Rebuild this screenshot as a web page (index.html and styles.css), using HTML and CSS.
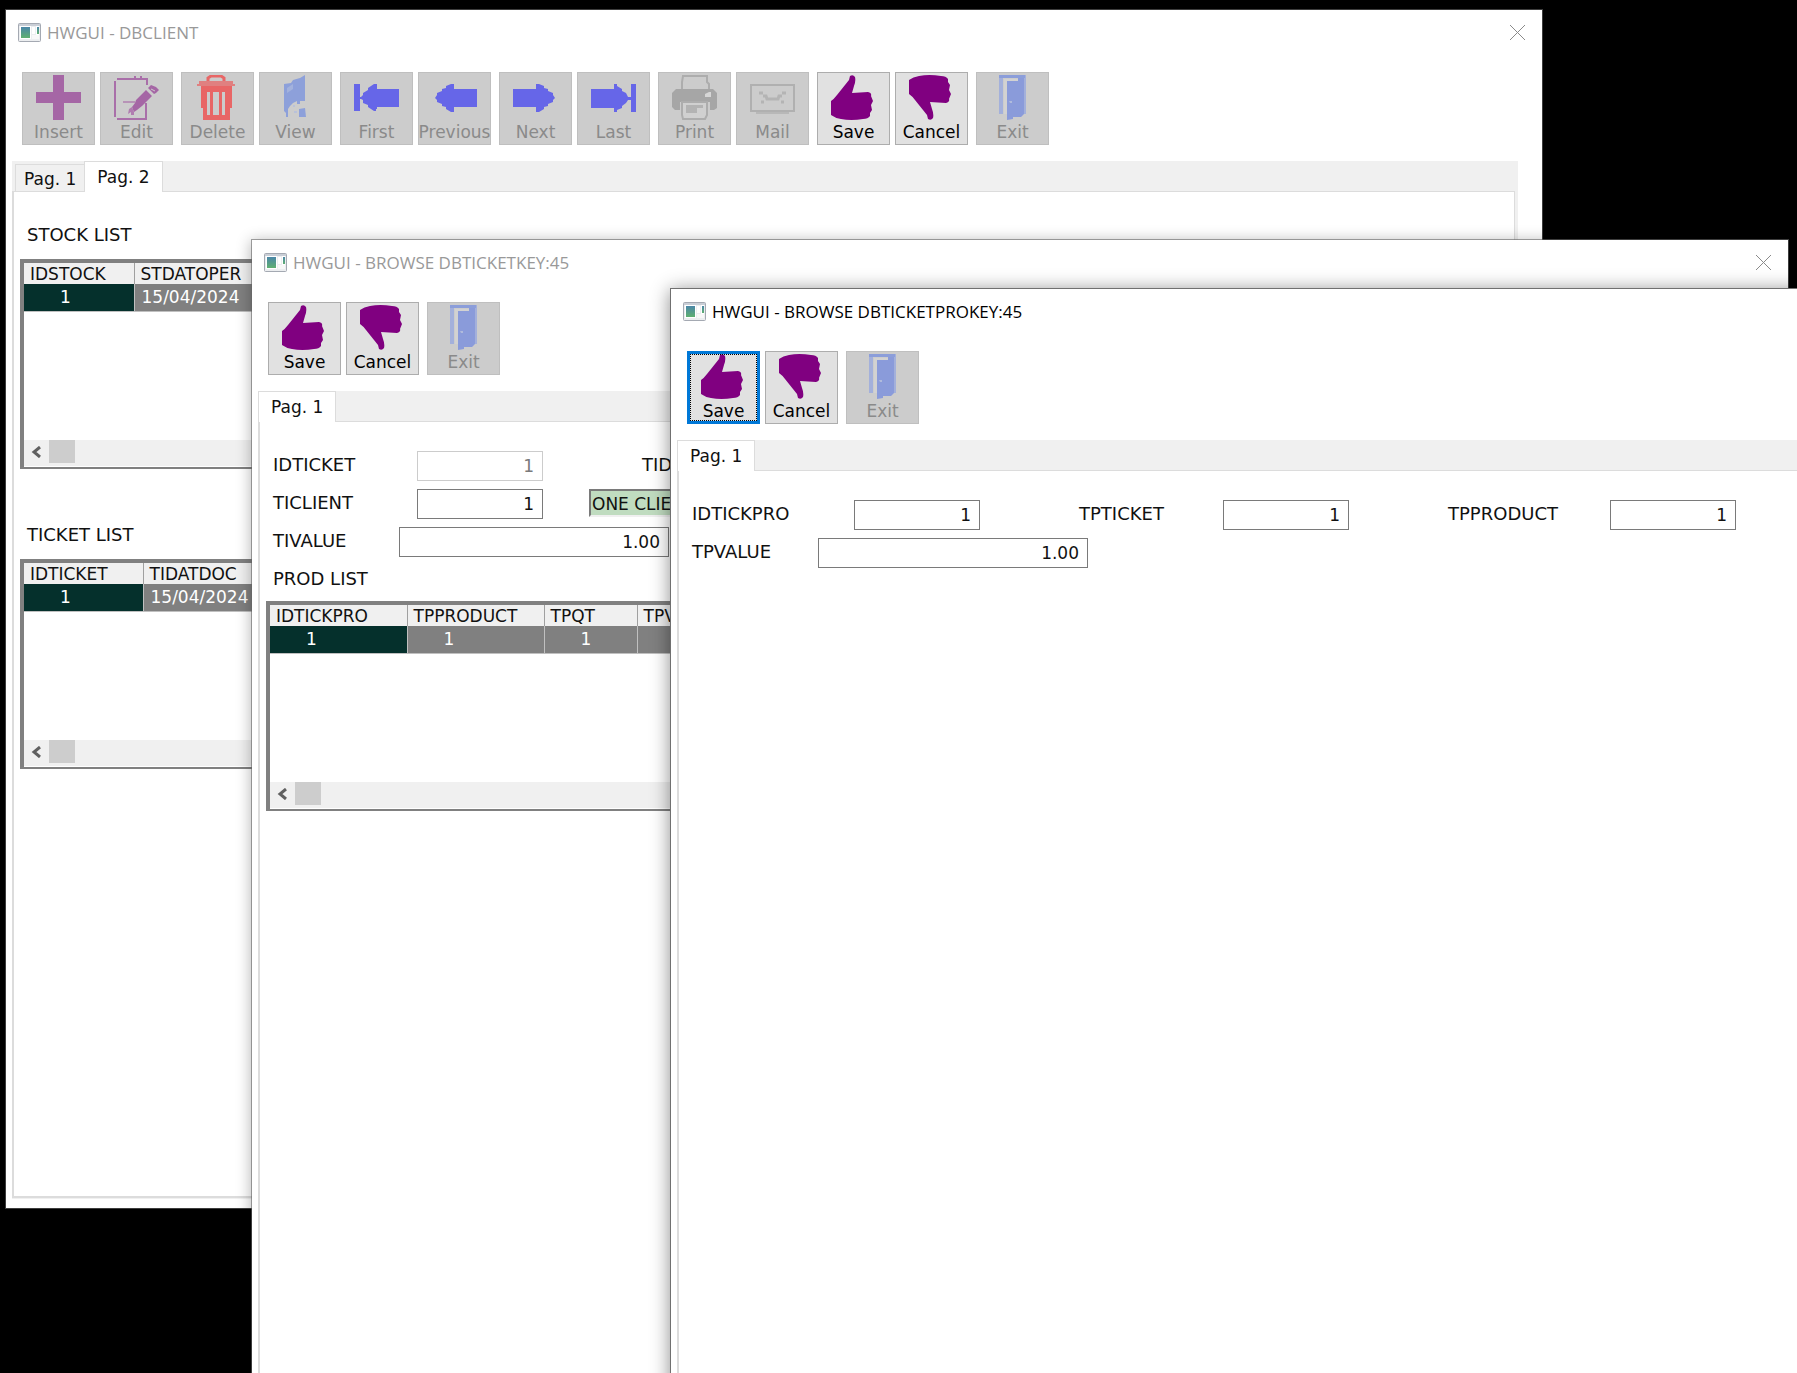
FILE: index.html
```html
<!DOCTYPE html>
<html lang="en">
<head>
  <meta charset="UTF-8" />
  <title>HWGUI - DBCLIENT</title>
  <meta name="viewport" content="width=device-width, initial-scale=1.0" />
  <link rel="stylesheet" href="styles.css">
</head>
<body>
  <!-- Icon sprite -->
  <svg class="sprite" aria-hidden="true">
    <defs>
      <linearGradient id="screen" x1="0" y1="0" x2="0" y2="1">
        <stop offset="0" stop-color="#4a86a8" />
        <stop offset="1" stop-color="#5fb070" />
      </linearGradient>
    </defs>
    <symbol id="i-app" viewBox="0 0 23 19">
      <rect x="0.5" y="0.5" width="22" height="18" rx="1" fill="#eceef0" stroke="#a4a9b2" />
      <rect x="1" y="1" width="21" height="2" fill="#c9ced6" />
      <rect x="2" y="3" width="11" height="13" fill="#fff" />
      <rect x="3" y="4" width="9" height="11" fill="url(#screen)" />
      <rect x="14" y="4" width="3" height="7" fill="#fff" />
      <rect x="18" y="3" width="3" height="9" fill="#fff" />
      <rect x="19" y="4" width="2" height="7" fill="url(#screen)" />
      <rect x="14" y="12" width="7" height="4" fill="#f8f8f8" />
    </symbol>
    <symbol id="i-close" viewBox="0 0 15 15">
      <path d="M0 0L15 15M15 0L0 15" stroke="#8a8a8a" fill="none" />
    </symbol>
    <symbol id="i-insert" viewBox="0 0 45 45">
      <path d="M17 0H28V17H45V28H28V45H17V28H0V17H17Z" fill="#a566a5" />
    </symbol>
    <symbol id="i-edit" viewBox="0 0 45 45">
      <path d="M1 6V42M3 4H33V10M3 44H32V28M21 1V4M27 1V4" stroke="#a96fa9" stroke-width="2" fill="none" />
      <path d="M9 27H21" stroke="#b793b7" stroke-width="2" />
      <path d="M18 32L21 28L22 25L32 15L38 21L28 31L23 35L20 37Z" fill="#a566a5" />
      <path d="M34 13L37 10L42 12L45 15L42 18L40 19Z" fill="#a566a5" />
      <path d="M37 14L41 16" stroke="#ccc" stroke-width="1" />
      <path d="M14 39L15 34L18 32L20 37V40H17V37Z" fill="#b07cb0" />
    </symbol>
    <symbol id="i-delete" viewBox="0 0 45 45">
      <path d="M13 6V3L16 1H26L29 3V6" stroke="#e86666" stroke-width="3" fill="none" />
      <path d="M4 6H38V9H40V11H2V9H4Z" fill="#e08080" />
      <path fill-rule="evenodd" d="M6 11H37V33H35V45H8V33H6ZM12 17V40H15V17ZM18 17V40H24V17ZM27 17V40H30V17Z" fill="#e86666" />
    </symbol>
    <symbol id="i-view" viewBox="0 0 45 45">
      <path d="M11 9L18 8L20 5L27 3L32 0V26H27V29H24V26L20 28L17 31L15 34V42H13V38L11 36Z" fill="#8da0da" />
      <path d="M14 13L20 9V14L14 18Z" fill="#a3b2dd" />
      <path d="M26 34L32 33L33 42H26Z" fill="#8da0da" />
      <path d="M20 30H22V32H20ZM21 36H24V38H21Z" fill="#b9c1da" />
    </symbol>
    <symbol id="i-first" viewBox="0 0 45 45">
      <path d="M0 9H6V22H7L9 20V18L14 15V13L20 9H23V14H45V32H23V34H22V36H20L14 32V30L9 28V25L7 24H6V36H0Z" fill="#6666e8" />
    </symbol>
    <symbol id="i-previous" viewBox="0 0 45 45">
      <path d="M3 23L5 20V18L10 16V14L14 13V11L19 9H22V14H45V32H22V37H19L14 34V32L10 31V29L5 27V25Z" fill="#6666e8" />
    </symbol>
    <symbol id="i-next" viewBox="0 0 45 45">
      <path d="M42 23L40 20V18L35 16V14L31 13V11L26 9H23V14H0V32H23V37H26L31 34V32L35 31V29L40 27V25Z" fill="#6666e8" />
    </symbol>
    <symbol id="i-last" viewBox="0 0 45 45">
      <path d="M40 9H45V37H40V25H37L35 28L31 31V33L26 35V37H23V33H0V14H23V9H26V11L31 14V16L35 18L37 22H40Z" fill="#6666e8" />
    </symbol>
    <symbol id="i-print" viewBox="0 0 45 45">
      <path d="M10 15V7L11 1H35V7L37 9V15" stroke="#adadad" stroke-width="2" fill="none" />
      <path d="M4 14H41L45 18V33L42 35H38V27H8V35H3L0 32V18Z" fill="#a6a6a6" />
      <path d="M33 19L37 17H39V22H33Z" fill="#d6d6d6" />
      <path d="M10 27H35V40L33 44H11L10 40Z" stroke="#adadad" stroke-width="2" fill="#d0d0d0" />
      <path d="M14 30H31V33H25V38H14Z" fill="#b3b3b3" />
    </symbol>
    <symbol id="i-mail" viewBox="0 0 45 45">
      <rect x="1" y="10" width="43" height="26" stroke="#b0b0b0" stroke-width="2" fill="none" />
      <path d="M6 38H39" stroke="#b8b8b8" stroke-width="2" />
      <path d="M9 18H13M32 18H36M13 21H16L17 24H28L29 21H32M11 27H14M31 27H34" stroke="#b4b4b4" stroke-width="3" fill="none" />
    </symbol>
    <symbol id="i-save" viewBox="0 0 45 45">
      <path d="M18 5L19 1Q22 -1 24 2Q25 6 23 11L21 18L37 17Q41 18 40 21L42 26L40 30L41 35L39 38L39 41Q37 44 32 44Q20 46 10 44Q4 43 0 40V26Q3 24 6 20L14 10Z" fill="#800080" />
    </symbol>
    <symbol id="i-cancel" viewBox="0 0 45 45">
      <path transform="matrix(1 0 0 -1 0 45)" d="M18 5L19 1Q22 -1 24 2Q25 6 23 11L21 18L37 17Q41 18 40 21L42 26L40 30L41 35L39 38L39 41Q37 44 32 44Q20 46 10 44Q4 43 0 40V26Q3 24 6 20L14 10Z" fill="#800080" />
    </symbol>
    <symbol id="i-exit" viewBox="0 0 45 45">
      <path d="M9 0H36V39H33V6H28V3H13V39H9Z" fill="#a3b0db" />
      <path d="M9 0H35V3H9Z" fill="#8c9eda" />
      <path d="M17 6H28V3H34V39L31 42H23V44L17 45Z" fill="#8a9bda" />
      <path d="M14 4H28V6H17V39H14Z" fill="#d2d2d2" />
      <path d="M19 26H22V28H20Z" fill="#b0bbdc" />
    </symbol>
  </svg>

  <main class="desktop">

    <!-- DBCLIENT -->
    <section class="window win-client">
      <header class="titlebar">
        <svg class="app-icon"><use href="#i-app" /></svg>
        <h1 class="title">HWGUI - DBCLIENT</h1>
        <button class="close-btn" aria-label="Close"><svg><use href="#i-close" /></svg></button>
      </header>
      <div class="toolbar">
        <div class="group">
          <button class="tool" disabled><svg><use href="#i-insert" /></svg>Insert</button>
          <button class="tool" disabled><svg><use href="#i-edit" /></svg>Edit</button>
        </div>
        <div class="group">
          <button class="tool" disabled><svg><use href="#i-delete" /></svg>Delete</button>
          <button class="tool" disabled><svg><use href="#i-view" /></svg>View</button>
        </div>
        <div class="group">
          <button class="tool" disabled><svg><use href="#i-first" /></svg>First</button>
          <button class="tool" disabled><svg><use href="#i-previous" /></svg>Previous</button>
        </div>
        <div class="group">
          <button class="tool" disabled><svg><use href="#i-next" /></svg>Next</button>
          <button class="tool" disabled><svg><use href="#i-last" /></svg>Last</button>
        </div>
        <div class="group">
          <button class="tool" disabled><svg><use href="#i-print" /></svg>Print</button>
          <button class="tool" disabled><svg><use href="#i-mail" /></svg>Mail</button>
        </div>
        <div class="group">
          <button class="tool"><svg><use href="#i-save" /></svg>Save</button>
          <button class="tool"><svg><use href="#i-cancel" /></svg>Cancel</button>
        </div>
        <div class="group">
          <button class="tool" disabled><svg><use href="#i-exit" /></svg>Exit</button>
        </div>
      </div>
      <div class="tabs">
        <div class="tab-strip" role="tablist">
          <button class="tab first" role="tab" aria-selected="false">Pag. 1</button>
          <button class="tab active" role="tab" aria-selected="true">Pag. 2</button>
        </div>
        <div class="panel lists">
          <div class="list">
            <h2 class="caption">STOCK LIST</h2>
            <div class="browse">
              <table>
                <colgroup><col class="col-s"><col></colgroup>
                <thead><tr><th>IDSTOCK</th><th>STDATOPER</th></tr></thead>
                <tbody><tr><td class="num current">1</td><td>15/04/2024</td></tr></tbody>
              </table>
              <div class="scrollbar">
                <button class="arrow" aria-label="Scroll left"><svg viewBox="0 0 10 12"><path d="M9 1L3 6L9 11" /></svg></button>
                <div class="thumb"></div>
              </div>
            </div>
          </div>
          <div class="list">
            <h2 class="caption">TICKET LIST</h2>
            <div class="browse">
              <table>
                <colgroup><col class="col-m"><col></colgroup>
                <thead><tr><th>IDTICKET</th><th>TIDATDOC</th></tr></thead>
                <tbody><tr><td class="num current">1</td><td>15/04/2024</td></tr></tbody>
              </table>
              <div class="scrollbar">
                <button class="arrow" aria-label="Scroll left"><svg viewBox="0 0 10 12"><path d="M9 1L3 6L9 11" /></svg></button>
                <div class="thumb"></div>
              </div>
            </div>
          </div>
        </div>
      </div>
    </section>

    <!-- DBTICKET -->
    <section class="window win-ticket">
      <header class="titlebar">
        <svg class="app-icon"><use href="#i-app" /></svg>
        <h1 class="title">HWGUI - BROWSE DBTICKETKEY:45</h1>
        <button class="close-btn" aria-label="Close"><svg><use href="#i-close" /></svg></button>
      </header>
      <div class="toolbar">
        <div class="group">
          <button class="tool"><svg><use href="#i-save" /></svg>Save</button>
          <button class="tool"><svg><use href="#i-cancel" /></svg>Cancel</button>
        </div>
        <div class="group">
          <button class="tool" disabled><svg><use href="#i-exit" /></svg>Exit</button>
        </div>
      </div>
      <div class="tabs">
        <div class="tab-strip" role="tablist">
          <button class="tab active" role="tab" aria-selected="true">Pag. 1</button>
        </div>
        <div class="panel form">
          <div class="row">
            <label class="len-8" for="idticket">IDTICKET</label>
            <input class="key" id="idticket" type="text" value="1" disabled>
            <span class="next">TIDATDOC</span>
          </div>
          <div class="row">
            <label class="len-8" for="ticlient">TICLIENT</label>
            <input class="key" id="ticlient" type="text" value="1">
            <output class="lookup" for="ticlient">ONE CLIENT</output>
          </div>
          <div class="row">
            <label class="len-7" for="tivalue">TIVALUE</label>
            <input class="amount" id="tivalue" type="text" value="1.00">
          </div>
          <h2 class="caption">PROD LIST</h2>
          <div class="browse">
            <table>
              <colgroup><col class="col-l"><col class="col-l"><col class="col-xs"><col></colgroup>
              <thead><tr><th>IDTICKPRO</th><th>TPPRODUCT</th><th>TPQT</th><th>TPVALUE</th></tr></thead>
              <tbody><tr><td class="num current">1</td><td class="num">1</td><td class="num">1</td><td class="num">1.00</td></tr></tbody>
            </table>
            <div class="scrollbar">
              <button class="arrow" aria-label="Scroll left"><svg viewBox="0 0 10 12"><path d="M9 1L3 6L9 11" /></svg></button>
              <div class="thumb"></div>
            </div>
          </div>
        </div>
      </div>
    </section>

    <!-- DBTICKETPRO -->
    <section class="window win-product focused">
      <header class="titlebar">
        <svg class="app-icon"><use href="#i-app" /></svg>
        <h1 class="title">HWGUI - BROWSE DBTICKETPROKEY:45</h1>
        <button class="close-btn" aria-label="Close"><svg><use href="#i-close" /></svg></button>
      </header>
      <div class="toolbar">
        <div class="group">
          <button class="tool default"><svg><use href="#i-save" /></svg>Save</button>
          <button class="tool"><svg><use href="#i-cancel" /></svg>Cancel</button>
        </div>
        <div class="group">
          <button class="tool" disabled><svg><use href="#i-exit" /></svg>Exit</button>
        </div>
      </div>
      <div class="tabs">
        <div class="tab-strip" role="tablist">
          <button class="tab active" role="tab" aria-selected="true">Pag. 1</button>
        </div>
        <div class="panel form">
          <div class="row">
            <label class="len-9" for="idtickpro">IDTICKPRO</label>
            <input class="key" id="idtickpro" type="text" value="1">
            <label class="len-8 next" for="tpticket">TPTICKET</label>
            <input class="key" id="tpticket" type="text" value="1">
            <label class="len-9 next" for="tpproduct">TPPRODUCT</label>
            <input class="key" id="tpproduct" type="text" value="1">
          </div>
          <div class="row">
            <label class="len-7" for="tpvalue">TPVALUE</label>
            <input class="amount" id="tpvalue" type="text" value="1.00">
          </div>
        </div>
      </div>
    </section>

  </main>
</body>
</html>
```
FILE: styles.css
```css
:root {
  --char: 18px;
  --face: #f0f0f0;
  --line: #dcdcdc;
}

* {
  box-sizing: border-box;
}

body {
  margin: 0;
  background: #000;
  color: #111;
  font-family: "DejaVu Sans", Verdana, sans-serif;
  font-size: 18px;
}

button,
input {
  font-family: inherit;
  font-size: 17px;
  color: inherit;
}

.sprite {
  position: absolute;
  width: 0;
  height: 0;
}

.desktop {
  position: relative;
  height: 100vh;
  overflow: hidden;
}

/* Windows */
.window {
  position: absolute;
  display: flex;
  flex-direction: column;
  background: #fff;
  background-clip: padding-box;
  border: 1px solid rgba(102, 102, 102, 0.6);
  box-shadow: 0 2px 14px rgba(0, 0, 0, 0.3);
}

.window.focused {
  border-color: #707070;
  box-shadow: 0 2px 18px rgba(0, 0, 0, 0.45);
}

.win-client {
  inset: 9px 254px 164px 5px;
}

.win-ticket {
  inset: 239px 8px -66px 251px;
}

.win-product {
  inset: 288px -411px -115px 670px;
}

.titlebar {
  display: flex;
  align-items: center;
  gap: 6px;
  height: 45px;
  padding: 0 17px 0 12px;
}

.app-icon {
  width: 23px;
  height: 19px;
}

.title {
  flex: 1;
  margin: 0;
  font-family: "Open Sans", "Segoe UI", sans-serif;
  font-size: 17px;
  font-weight: 400;
  color: #999;
}

.focused .title {
  color: #000;
}

.close-btn {
  display: flex;
  padding: 0;
  border: none;
  background: none;
}

.close-btn svg {
  width: 15px;
  height: 15px;
}

/* Toolbar */
.toolbar {
  display: flex;
  gap: 8px;
  padding: 17px 16px 16px;
}

.group {
  display: flex;
  gap: 5px;
}

.tool {
  display: flex;
  flex-direction: column;
  align-items: center;
  width: 73px;
  height: 73px;
  padding: 2px 0 0;
  border: 1px solid #adadad;
  background: #e1e1e1;
  color: #000;
  line-height: 24px;
  white-space: nowrap;
}

.tool svg {
  flex: none;
  width: 45px;
  height: 45px;
}

.tool:disabled {
  border-color: #bfbfbf;
  background: #ccc;
  color: #8a8a8a;
}

.tool.default {
  border-color: #0078d7;
  box-shadow: inset 0 0 0 2px #0078d7;
  outline: 1px dotted #000;
  outline-offset: -4px;
}

/* Tabs */
.tabs {
  flex: 1;
  display: flex;
  flex-direction: column;
  margin: 0 24px 9px 6px;
  background: var(--face);
}

.tab-strip {
  display: flex;
  align-items: flex-end;
  height: 30px;
}

.tab {
  height: 27px;
  padding: 2px 8px 0;
  border: 1px solid var(--line);
  border-bottom: none;
  background: var(--face);
}

.tab.first {
  margin-left: 3px;
  border-right: none;
}

.tab.active {
  height: 31px;
  margin-bottom: -1px;
  padding: 0 12px 0;
  background: #fff;
  z-index: 1;
}

.panel {
  flex: 1;
  margin: 0 3px 1px 0;
  padding: 29px 6px 0;
  border: 1px solid var(--line);
  border-left-width: 2px;
  border-bottom-width: 2px;
  background: #fff;
}

.lists {
  display: flex;
  flex-direction: column;
  gap: 52px;
}

.list {
  display: flex;
  flex-direction: column;
  gap: 10px;
}

.caption {
  margin: 0;
  padding-left: 7px;
  font-size: 18px;
  font-weight: 400;
  line-height: 28px;
}

/* Form rows */
.form {
  display: flex;
  flex-direction: column;
  gap: 8px;
}

.row {
  display: flex;
  height: 30px;
  padding-left: 7px;
  line-height: 28px;
}

.len-7 {
  width: calc(7 * var(--char));
}

.len-8 {
  width: calc(8 * var(--char));
}

.len-9 {
  width: calc(9 * var(--char));
}

.next {
  margin-left: 99px;
}

.row input {
  padding: 0 8px;
  border: 1px solid #7a7a7a;
  background: #fff;
  text-align: right;
}

.row input:disabled {
  border-color: #ccc;
  color: #7a7a7a;
}

.row .key {
  width: 126px;
}

.row .amount {
  width: 270px;
}

.lookup {
  width: 540px;
  height: 28px;
  margin-left: 46px;
  padding-left: 1px;
  border: 2px solid;
  border-color: #7a7a7a #f0f0f0 #f0f0f0 #7a7a7a;
  background: #c0dcc0;
  font-size: 17px;
  line-height: 26px;
  white-space: nowrap;
}

/* Browse grid */
.browse {
  display: flex;
  flex-direction: column;
  height: 210px;
  border: 4px solid #808080;
  border-bottom-width: 2px;
  border-right-width: 2px;
}

.browse table {
  width: 100%;
  border-collapse: collapse;
  table-layout: fixed;
}

.col-xs {
  width: 93px;
}

.col-s {
  width: 110px;
}

.col-m {
  width: 119px;
}

.col-l {
  width: 137px;
}

.browse th {
  height: 21px;
  padding: 1px 0 0 6px;
  border-right: 1px solid #a0a0a0;
  background: var(--face);
  font-size: 17px;
  font-weight: 400;
  line-height: 20px;
  text-align: left;
}

.browse td {
  height: 27px;
  padding: 0 0 0 7px;
  border-right: 1px solid #c0c0c0;
  border-bottom: 1px solid #c0c0c0;
  background: #808080;
  color: #fff;
  font-size: 17px;
  line-height: 26px;
}

.browse .num {
  padding-left: 36px;
}

.browse .current {
  background: #05302c;
}

.scrollbar {
  display: flex;
  height: 26px;
  margin-top: auto;
  margin-bottom: 1px;
  background: var(--face);
}

.arrow {
  width: 25px;
  padding: 0 2px 2px 0;
  border: none;
  background: none;
}

.arrow svg {
  width: 10px;
  height: 12px;
}

.arrow path {
  fill: none;
  stroke: #606060;
  stroke-width: 3;
}

.thumb {
  width: 26px;
  height: 23px;
  background: #cdcdcd;
}
```
